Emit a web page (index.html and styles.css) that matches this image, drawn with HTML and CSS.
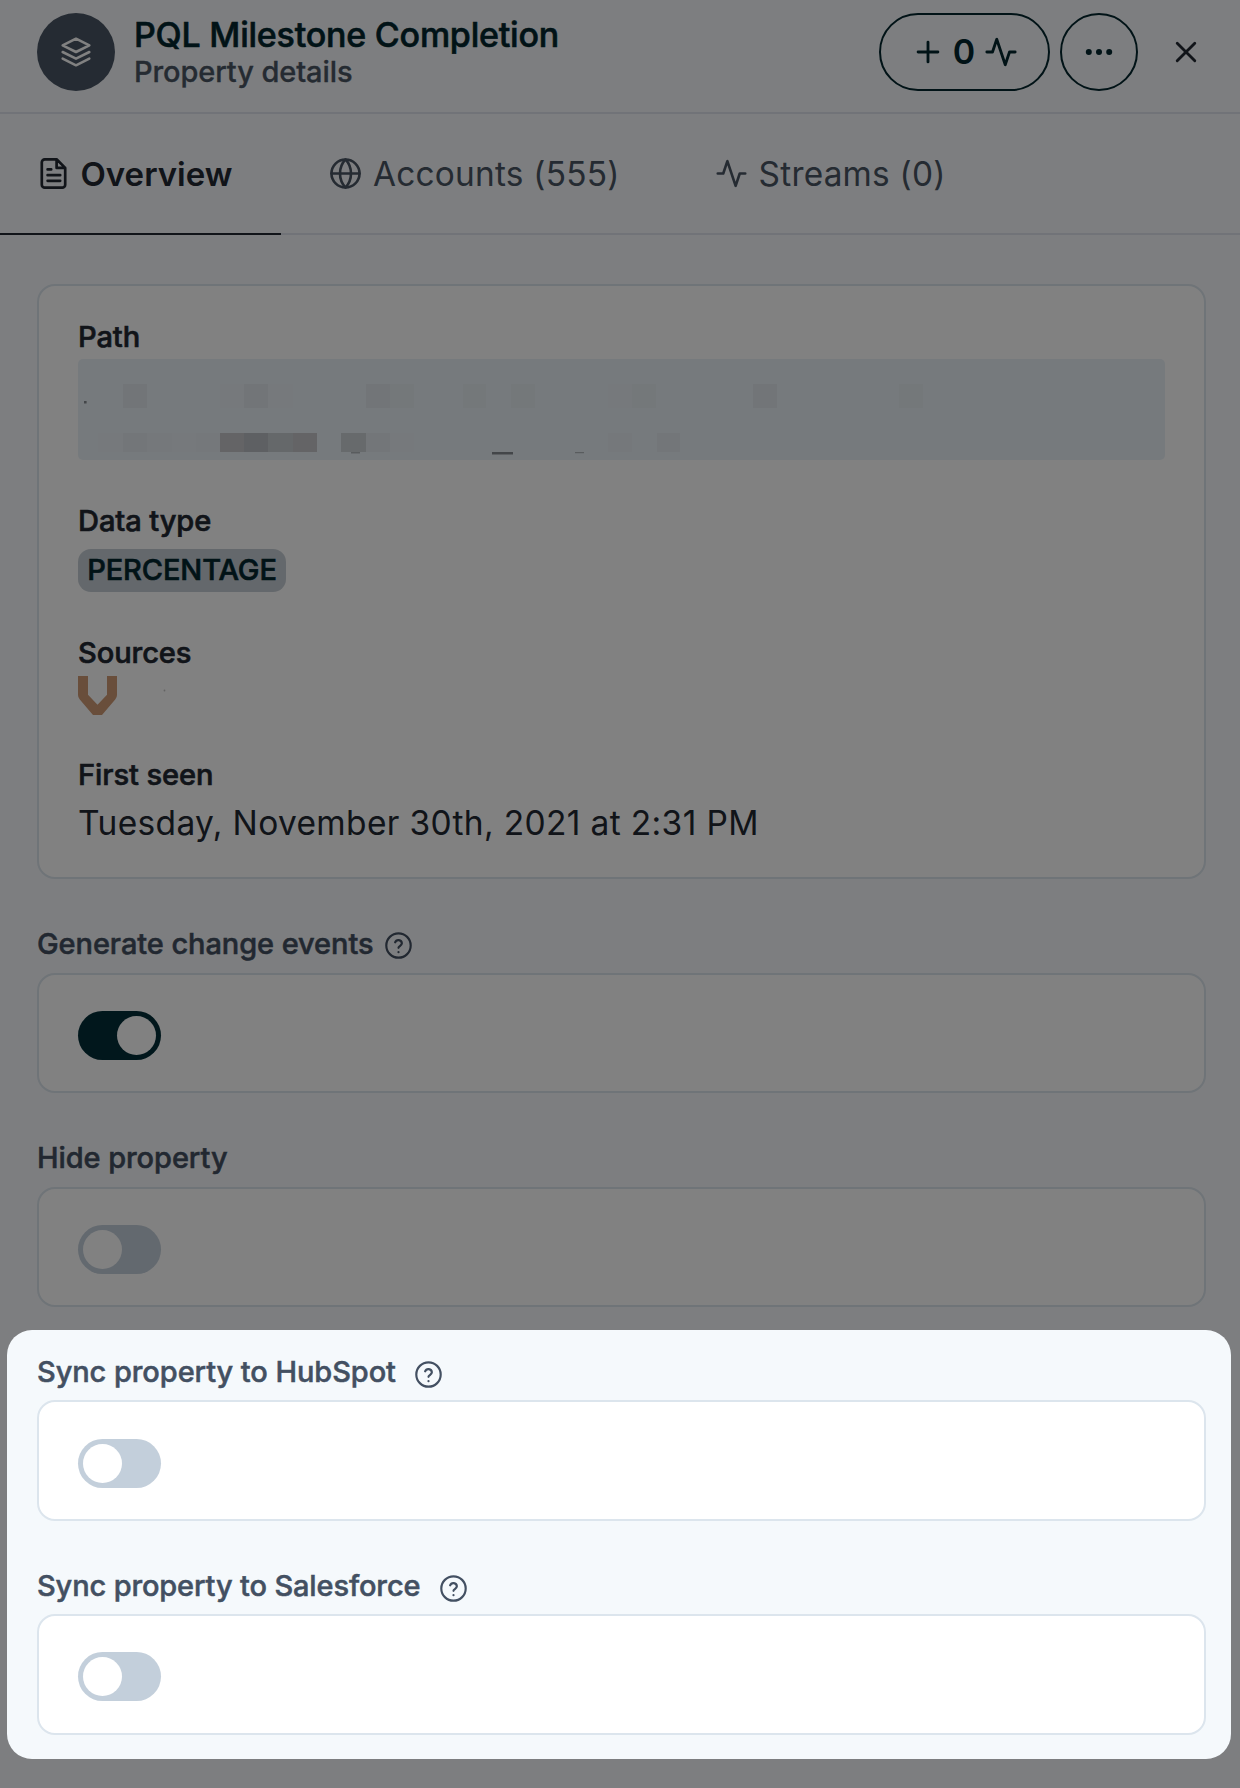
FILE: index.html
```html
<!DOCTYPE html>
<html lang="en">
<head>
<meta charset="utf-8">
<title>PQL Milestone Completion</title>
<link rel="stylesheet" href="styles.css">
</head>
<body>
<div class="panel">
  <header class="header">
    <span class="avatar">
      <svg class="icon-layers" viewBox="0 0 24 24"><path d="M12 2 2 7l10 5 10-5zM2 17l10 5 10-5M2 12l10 5 10-5"/></svg>
    </span>
    <div class="heading">
      <h1 class="title">PQL Milestone Completion</h1>
      <p class="subtitle">Property details</p>
    </div>
    <div class="actions">
      <button class="pill">
        <svg class="icon" viewBox="0 0 24 24"><path d="M12 5v14M5 12h14"/></svg>
        <span class="count">0</span>
        <svg class="icon" viewBox="0 0 24 24"><path d="M22 12h-4l-3 9L9 3l-3 9H2"/></svg>
      </button>
      <button class="more">
        <svg class="icon-dots" viewBox="0 0 28 8"><circle cx="3.8" cy="4" r="3"/><circle cx="14" cy="4" r="3"/><circle cx="24.2" cy="4" r="3"/></svg>
      </button>
      <button class="close">
        <svg class="icon" viewBox="0 0 24 24"><path d="M18.2 5.8 5.8 18.2M5.8 5.8l12.4 12.4"/></svg>
      </button>
    </div>
  </header>

  <nav class="tabs">
    <a class="tab tab-active">
      <svg class="icon-doc" viewBox="0 0 33 33"><path d="M19.6 2.3H7.8a3 3 0 0 0-3 3v22.4a3 3 0 0 0 3 3h17.4a3 3 0 0 0 3-3V10.9zM19.6 2.3v8.6h8.6M10.6 12.4h3.6M10.6 18.2h12.6M10.6 23.8h12.6"/></svg>
      <span>Overview</span>
    </a>
    <a class="tab">
      <svg class="icon-tab" viewBox="0 0 24 24"><circle cx="12" cy="12" r="10.2"/><path d="M1.8 12h20.4M12 1.8c2.6 2.8 4 6.4 4 10.2s-1.4 7.4-4 10.2c-2.6-2.8-4-6.4-4-10.2s1.4-7.4 4-10.2z"/></svg>
      <span>Accounts (555)</span>
    </a>
    <a class="tab">
      <svg class="icon-tab" viewBox="0 0 24 24"><path d="M22 12h-4l-3 9L9 3l-3 9H2"/></svg>
      <span>Streams (0)</span>
    </a>
  </nav>

  <main class="content">
    <section class="card details">
      <div class="field">
        <h2 class="field-label">Path</h2>
        <div class="path">
          <svg class="path-tiles" viewBox="78 359 1087 101">
            <g shape-rendering="crispEdges">
              <path fill="#e2e8ed" d="M123 384h24v24h-24zM244 384h24v24h-24zM366 384h24v24h-24zM753 384h24v24h-24z"/>
              <path fill="#e6edf2" d="M390 384h24v24h-24zM463 384h23v24h-23zM511 384h24v24h-24zM632 384h24v24h-24zM899 384h24v24h-24z"/>
              <path fill="#e9f0f5" d="M220 384h24v24h-24zM268 384h25v24h-25zM608 384h24v24h-24zM98 433h25v19h-25zM172 433h24v19h-24zM390 433h24v19h-24z"/>
              <path fill="#e4eaef" d="M123 433h24v19h-24zM366 433h24v19h-24zM657 433h23v19h-23z"/>
              <path fill="#e7eef3" d="M147 433h25v19h-25zM196 433h24v19h-24zM608 433h24v19h-24z"/>
              <path fill="#c6c6ca" d="M220 433h24v19h-24zM293 433h24v19h-24z"/>
              <path fill="#babfc3" d="M244 433h24v19h-24z"/>
              <path fill="#c8cdd1" d="M268 433h25v19h-25z"/>
              <path fill="#cbd1d5" d="M341 433h25v19h-25z"/>
            </g>
            <path fill="#858b90" d="M84 401h2.6v2.5H84zM492 452h21v2.4h-21z"/>
            <path fill="#b0b6ba" d="M351 452h9v1.4h-9zM575 452h9v1.2h-9z"/>
          </svg>
        </div>
      </div>
      <div class="field">
        <h2 class="field-label">Data type</h2>
        <span class="badge">PERCENTAGE</span>
      </div>
      <div class="field">
        <h2 class="field-label">Sources</h2>
        <svg class="source-logo" viewBox="0 0 90 39"><path fill="#d09a75" d="M0 0h10v18.7l9.5 10 9.5-10V0h10v19q0 2.6-1.8 4.5L24 39h-9L1.8 23.5Q0 21.6 0 19z"/><circle cx="86.5" cy="14.5" r=".9" fill="#c4c4c4"/></svg>
      </div>
      <div class="field">
        <h2 class="field-label">First seen</h2>
        <p class="date">Tuesday, November 30th, 2021 at 2:31 PM</p>
      </div>
    </section>

    <section class="setting">
      <h2 class="setting-label">Generate change events
        <svg class="help" viewBox="0 0 24 24"><circle cx="12" cy="12" r="10.1"/><path d="M9.2 9.4a2.9 2.9 0 0 1 5.6.8c0 1.9-2.8 2.5-2.8 3.7M12 17.4v.1"/></svg>
      </h2>
      <div class="card toggle-card"><span class="toggle toggle-on"></span></div>
    </section>
    <section class="setting">
      <h2 class="setting-label">Hide property</h2>
      <div class="card toggle-card"><span class="toggle"></span></div>
    </section>

    <div class="spotlight">
      <section class="setting">
        <h2 class="setting-label">Sync property to HubSpot
          <svg class="help help-spaced" viewBox="0 0 24 24"><circle cx="12" cy="12" r="10.1"/><path d="M9.2 9.4a2.9 2.9 0 0 1 5.6.8c0 1.9-2.8 2.5-2.8 3.7M12 17.4v.1"/></svg>
        </h2>
        <div class="card toggle-card"><span class="toggle"></span></div>
      </section>
      <section class="setting">
        <h2 class="setting-label setting-label-tight">Sync property to Salesforce
          <svg class="help help-spaced" viewBox="0 0 24 24"><circle cx="12" cy="12" r="10.1"/><path d="M9.2 9.4a2.9 2.9 0 0 1 5.6.8c0 1.9-2.8 2.5-2.8 3.7M12 17.4v.1"/></svg>
        </h2>
        <div class="card toggle-card"><span class="toggle"></span></div>
      </section>
    </div>
  </main>
</div>
</body>
</html>
```
FILE: styles.css
```css
* { box-sizing: border-box; }

body {
  margin: 0;
  font-family: Inter, "Liberation Sans", sans-serif;
  color: #222832;
}

h1, h2, p { margin: 0; font-weight: 500; }

svg {
  display: block;
  flex: none;
  fill: none;
  stroke: currentColor;
  stroke-width: 1.8;
  stroke-linecap: round;
  stroke-linejoin: round;
}

button {
  padding: 0;
  border: 0;
  background: none;
  color: inherit;
  font: inherit;
}

.panel {
  width: 1240px;
  height: 1788px;
  overflow: hidden;
  background: #f8fafd;
}

/* Header */
.header {
  display: flex;
  align-items: flex-start;
  height: 114px;
  padding: 13px 37px 0 37px;
  border-bottom: 2px solid #e0e3ed;
}

.avatar {
  display: flex;
  align-items: center;
  justify-content: center;
  width: 78px;
  height: 78px;
  border-radius: 50%;
  background: #4a5666;
  color: #fff;
}
.icon-layers { width: 32px; height: 32px; stroke-width: 1.9; }

.heading { flex: 1; padding: 3.5px 0 0 19px; }
.title {
  color: #03262e;
  font-size: 34px;
  line-height: 36px;
  letter-spacing: -0.22px;
  -webkit-text-stroke: 0.6px;
}
.subtitle {
  color: #4a5564;
  font-size: 29px;
  line-height: 37.5px;
  letter-spacing: -0.1px;
  -webkit-text-stroke: 0.3px;
}

.actions {
  display: flex;
  align-items: center;
  height: 78px;
  color: #03262e;
}
.icon { width: 34px; height: 34px; stroke-width: 2; }
.pill {
  display: flex;
  align-items: center;
  justify-content: center;
  width: 171px;
  height: 78px;
  border: 2px solid #03262e;
  border-radius: 39px;
}
.count {
  padding: 0 9px 2px 8px;
  font-size: 34px;
  font-weight: 600;
}
.more {
  display: flex;
  align-items: center;
  justify-content: center;
  width: 78px;
  height: 78px;
  margin-left: 10px;
  border: 2px solid #03262e;
  border-radius: 50%;
}
.icon-dots { width: 28px; height: 8px; fill: currentColor; stroke: none; }
.close { margin-left: 31px; color: #222832; }

/* Tabs */
.tabs {
  display: flex;
  height: 121px;
  border-bottom: 2px solid #e0e3ed;
}
.tab {
  display: flex;
  align-items: center;
  gap: 10.5px;
  height: 121px;
  padding: 0 47px 2px 48.5px;
  color: #4a5564;
  font-size: 33.4px;
  letter-spacing: 0.22px;
}
.tab-active {
  padding: 0 48.5px 0 37px;
  border-bottom: 2.5px solid #222832;
  color: #222832;
  font-size: 33px;
  font-weight: 600;
  letter-spacing: 0;
}
.icon-tab { width: 33px; height: 33px; stroke-width: 1.9; }
.icon-doc { width: 33px; height: 33px; stroke-width: 2.7; }

/* Content */
.content { padding: 49px 34px 0 37px; }

.card {
  border: 2px solid #dce5ed;
  border-radius: 18px;
  background: #fff;
}

.details {
  display: grid;
  align-content: start;
  gap: 42.8px;
  height: 595px;
  padding: 32.6px 39px 0;
}
.field-label {
  margin-bottom: 4.5px;
  font-size: 29.1px;
  line-height: 36px;
  letter-spacing: -0.1px;
  -webkit-text-stroke: 0.6px;
}
.path {
  height: 101px;
  border-radius: 5px;
  background: #eaf2f8;
}
.path-tiles { width: 1087px; height: 101px; stroke: none; }
.badge {
  display: block;
  width: 208px;
  height: 43px;
  margin-top: 10.5px;
  border-radius: 13px;
  background: #c6ced5;
  color: #03262e;
  font-size: 29px;
  font-weight: 500;
  letter-spacing: -0.1px;
  line-height: 42px;
  text-align: center;
  -webkit-text-stroke: 0.6px;
}
.source-logo { width: 90px; height: 39px; stroke: none; }
.date {
  margin-top: 6px;
  font-size: 33.5px;
  font-weight: 400;
  line-height: 48px;
  letter-spacing: 0.35px;
}

/* Settings */
.setting { margin-top: 47.4px; }
.setting-label {
  display: flex;
  align-items: center;
  height: 36px;
  margin-bottom: 10.2px;
  color: #435062;
  font-size: 29px;
  line-height: 36px;
  letter-spacing: -0.08px;
  -webkit-text-stroke: 0.5px;
}
.setting-label-tight { letter-spacing: -0.14px; }
.help { width: 29px; height: 29px; margin: 2.5px 0 0 10.5px; }
.help-spaced { margin: 4px 0 0 18.5px; }

.toggle-card { height: 120.4px; padding: 36.2px 39px 0; }
.toggle {
  display: block;
  width: 83px;
  height: 49px;
  padding: 5px;
  border-radius: 25px;
  background: #c3cfdb;
}
.toggle::before {
  content: "";
  display: block;
  width: 39px;
  height: 39px;
  border-radius: 50%;
  background: #fff;
}
.toggle-on { padding-left: 39px; background: #032e38; }

/* Highlighted settings; the shadow dims everything around them */
.spotlight {
  position: relative;
  height: 429.5px;
  margin: 22.8px -25px 0 -30px;
  padding: 24.4px 25px 0 30px;
  border-radius: 25px;
  background: #f5f9fc;
  box-shadow: 0 0 0 2000px rgba(0, 0, 0, 0.494);
}
.spotlight .setting:first-child { margin-top: 0; }
```
